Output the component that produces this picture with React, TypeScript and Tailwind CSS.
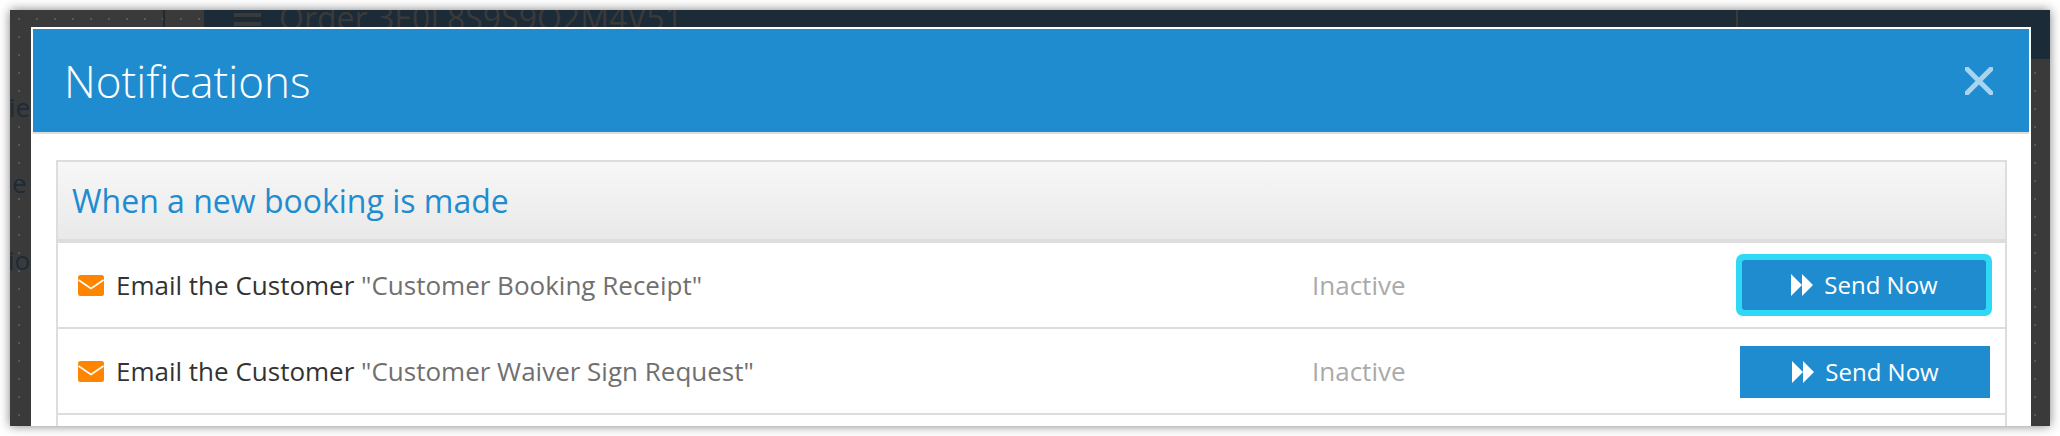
import React from "react";

const font = "font-['Open_Sans','Liberation_Sans',sans-serif]";

function MailIcon() {
  return (
    <svg width="26" height="21" viewBox="0 0 26 21" className="shrink-0">
      <rect width="26" height="21" rx="2.5" fill="#ff8500" />
      <path d="M0.5 5 L13 13.5 L25.5 5" fill="none" stroke="#fff" strokeWidth="1.6" />
    </svg>
  );
}

function ForwardIcon() {
  return (
    <svg width="22" height="22" viewBox="0 0 22 22" className="shrink-0">
      <path d="M0 0 L11 11 L0 22 Z M11 0 L22 11 L11 22 Z" fill="#fff" />
    </svg>
  );
}

function SendButton({ focused }: { focused?: boolean }) {
  if (focused) {
    return (
      <div className="mr-[13px] rounded-[7px] bg-[#2fd9f6] p-[6px]">
        <div className="flex h-[50px] w-[244px] items-center justify-center gap-[11px] rounded-[3px] bg-[#208cd0] pl-[1px] text-[24px] text-white">
          <ForwardIcon />
          <span>Send Now</span>
        </div>
      </div>
    );
  }
  return (
    <div className="mt-[1px] mr-[15px] flex h-[52px] w-[250px] items-center justify-center gap-[11px] bg-[#208cd0] pl-[1px] text-[24px] text-white">
      <ForwardIcon />
      <span>Send Now</span>
    </div>
  );
}

function Row({ name, focused }: { name: string; focused?: boolean }) {
  return (
    <div className="flex h-[86px] items-center border-b-[2px] border-[#dddddd] bg-white">
      <div className="flex w-[1254px] items-center gap-[12px] pl-[20px] text-[26px]">
        <MailIcon />
        <span className="text-[#333333]">
          Email the Customer <span className="text-[#707070]">"{name}"</span>
        </span>
      </div>
      <div className="text-[26px] text-[#aaaaaa]">Inactive</div>
      <div className="ml-auto">
        <SendButton focused={focused} />
      </div>
    </div>
  );
}

export default function App() {
  return (
    <div className={`h-[436px] w-[2060px] overflow-hidden bg-white p-[10px] ${font}`}>
      <div className="relative h-[416px] w-[2040px] overflow-hidden bg-[#3a3a3a] bg-[radial-gradient(circle,#5a5a5a_1px,transparent_1px)] bg-[size:18px_18px] shadow-[0_0_10px_rgba(0,0,0,0.5)]">
        {/* page behind the dialog */}
        <div className="flex h-[49px]">
          <div className="w-[153px]" />
          <div className="w-[2px] bg-[#1b2b38]" />
          <div className="w-[39px]" />
          <div className="flex flex-1 bg-[#1b2b38]">
            <div className="mt-[-8px] ml-[30px] flex h-[24px] w-[27px] flex-col justify-between pt-[2px]">
              <div className="h-[4px] bg-[#3a3a3a]" />
              <div className="h-[4px] bg-[#3a3a3a]" />
              <div className="h-[4px] bg-[#3a3a3a]" />
            </div>
            <div className="mt-[-16px] ml-[18px] text-[32px] leading-[48px] whitespace-nowrap text-[#3a3a3a]">
              Order 3E0L8S9S9O2M4V51
            </div>
            <div className="ml-[1053px] w-[2px] bg-[#3a3a3a]" />
          </div>
        </div>
        <div className="flex w-[21px] flex-col overflow-hidden pt-[30px] text-[26px] leading-[36px] text-[#1b2b38]">
          <div className="ml-[-1px]">ies</div>
          <div className="mt-[40px] ml-[2px]">e</div>
          <div className="mt-[41px] ml-[-2px]">ior</div>
        </div>

        {/* dialog */}
        <div className="absolute top-[17px] left-[21px] w-[2000px] bg-white">
          <div className="border-x-[2px] border-t-[2px] border-white">
            <div className="flex h-[103px] items-center justify-between bg-[#208cd0] pr-[36px] pl-[31px]">
              <span className="text-[44px] font-light text-white">Notifications</span>
              <svg width="28" height="28" viewBox="0 0 28 28">
                <path d="M2 2 L26 26 M26 2 L2 26" stroke="#a9d4ef" strokeWidth="5" strokeLinecap="square" />
              </svg>
            </div>
            <div className="h-[2px] bg-[#dddddd]" />
            <div className="ml-[23px] mr-[22px] mt-[26px] border-x-[2px] border-t-[2px] border-[#dddddd]">
              <div className="flex h-[81px] items-center border-b-[4px] border-[#dddddd] bg-gradient-to-b from-[#f7f7f7] to-[#e9e9e9] pl-[14px] text-[32px] text-[#208cd0]">
                When a new booking is made
              </div>
              <Row name="Customer Booking Receipt" focused />
              <Row name="Customer Waiver Sign Request" />
              <div className="h-[20px] bg-white" />
            </div>
          </div>
        </div>
      </div>
    </div>
  );
}
